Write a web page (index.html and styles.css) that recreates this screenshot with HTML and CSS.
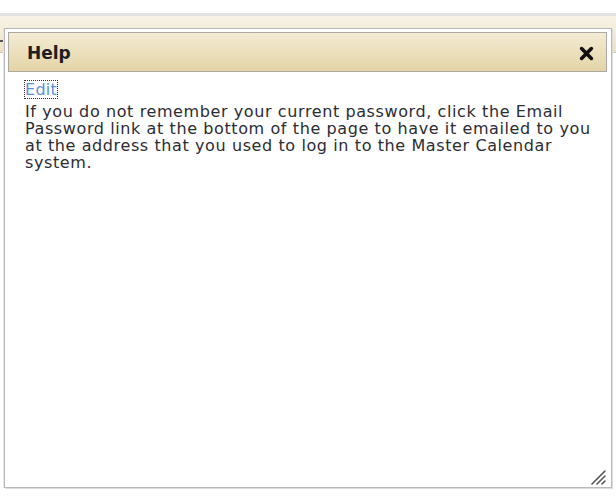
FILE: index.html
```html
<!DOCTYPE html>
<html>
<head>
<meta charset="utf-8">
<title>Help</title>
<link rel="stylesheet" href="styles.css">
</head>
<body>
<div class="page">
  <div class="topbar"><span class="topbar-mark"></span></div>
</div>
<div class="dialog">
  <div class="titlebar">
    <span class="title">Help</span>
    <span class="close" aria-label="close">
      <svg width="15" height="15" viewBox="0 0 15 15"><path d="M2.6 2.6 L12.4 12.4 M12.4 2.6 L2.6 12.4" stroke="#111" stroke-width="3.6" stroke-linecap="round"/></svg>
    </span>
  </div>
  <div class="content">
    <a class="edit" href="#">Edit</a>
    <p class="text">If you do not remember your current password, click the Email Password link at the bottom of the page to have it emailed to you at the address that you used to log in to the Master Calendar system.</p>
  </div>
  <span class="grip">
    <svg width="16" height="16" viewBox="0 0 16 16"><path d="M2 15 L15 2 M7 15 L15 7 M12 15 L15 12" stroke="#555" stroke-width="1.6" stroke-linecap="round"/></svg>
  </span>
</div>
</body>
</html>
```
FILE: styles.css
```css
html, body {
  margin: 0;
  padding: 0;
  background: #ffffff;
  width: 616px;
  height: 497px;
  overflow: hidden;
  font-family: "DejaVu Sans", Verdana, sans-serif;
}
.page {
  padding-top: 13px;
}
.topbar {
  position: relative;
  height: 36px;
  border-top: 3px solid #e2e2e2;
  border-bottom: 1px solid #cfc7b0;
  background: linear-gradient(#f7f3e6, #ece2c6);
}
.topbar-mark {
  position: absolute;
  left: 0;
  top: 24px;
  width: 3px;
  height: 2px;
  background: #555;
}
.dialog {
  position: absolute;
  left: 4px;
  top: 28px;
  width: 599px;
  height: 452px;
  padding: 3px 4px 3px 3px;
  background: #ffffff;
  border: 1px solid #b9b9b9;
  box-shadow: 1px 1px 0 #dcdcdc, -1px 0 0 #e4e4e4;
  display: flex;
  flex-direction: column;
}
.titlebar {
  height: 38px;
  border: 1px solid #aaa9a4;
  background: linear-gradient(#f3ebd3, #e4d4a6);
  display: flex;
  align-items: center;
  justify-content: space-between;
  padding: 0 12px 0 18px;
}
.title {
  font-weight: bold;
  font-size: 17px;
  color: #1e1e22;
  padding-top: 2px;
}
.close {
  display: flex;
  width: 15px;
  height: 15px;
  padding-top: 2px;
}
.content {
  padding: 9px 12px 0 17px;
  font-size: 16px;
  letter-spacing: 0.6px;
  line-height: 17px;
  color: #2c2c34;
}
.edit {
  display: inline-block;
  color: #5a8fd8;
  text-decoration: none;
  outline: 1px dotted #333;
  font-size: 16px;
  line-height: 17px;
  padding: 0;
  letter-spacing: 0.3px;
  margin-bottom: 5px;
}
.text {
  margin: 0;
}
.grip {
  position: absolute;
  right: 5px;
  bottom: 2px;
  display: flex;
}
```
